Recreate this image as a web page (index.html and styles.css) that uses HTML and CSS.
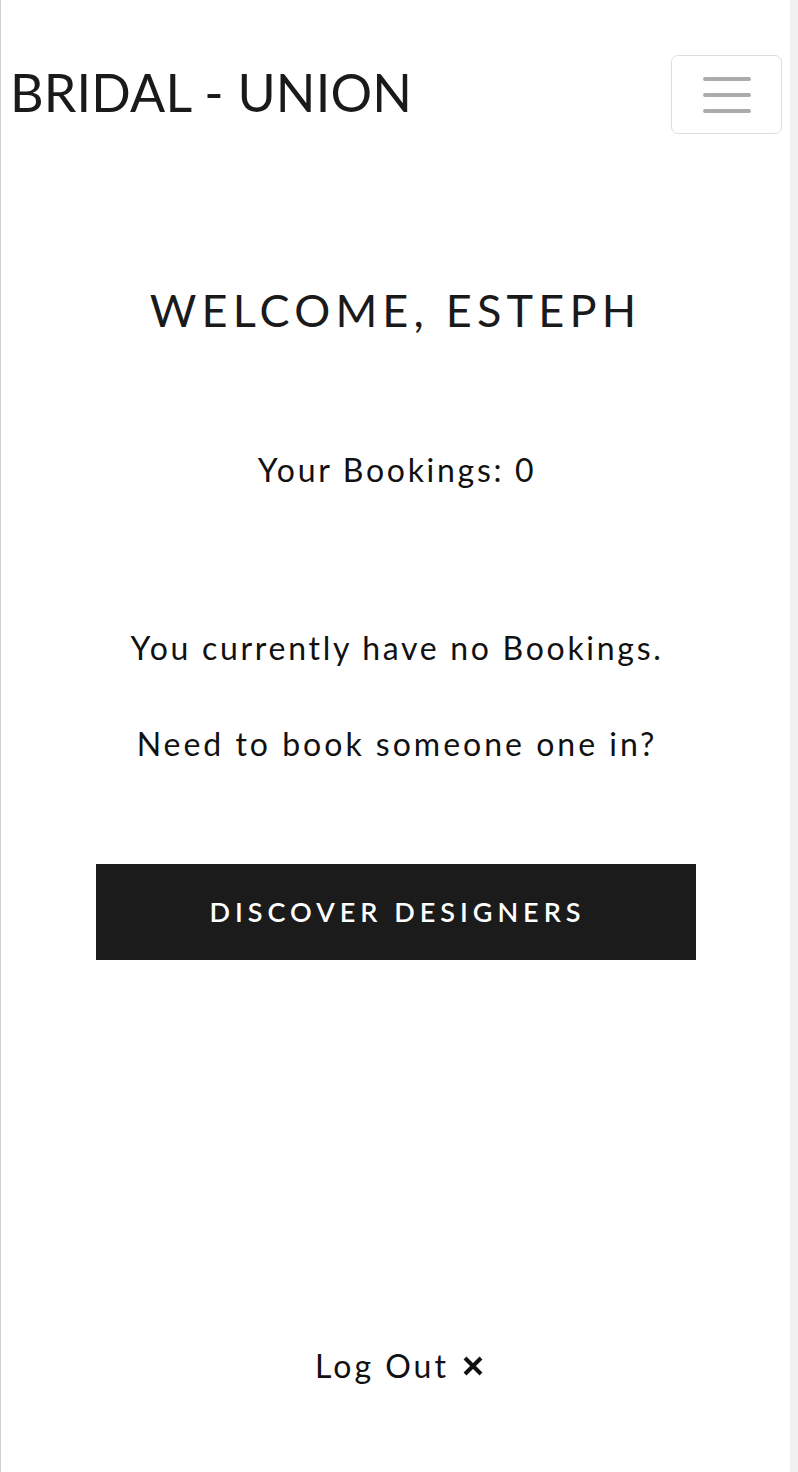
FILE: index.html
```html
<!DOCTYPE html>
<html lang="en">
<head>
<meta charset="utf-8">
<title>Bridal - Union</title>
<link rel="stylesheet" href="styles.css">
</head>
<body>
<div class="page">
  <nav class="navbar">
    <a class="brand" href="#">BRIDAL - UNION</a>
    <button class="toggler" aria-label="Toggle navigation">
      <span class="bar"></span><span class="bar"></span><span class="bar"></span>
    </button>
  </nav>
  <main class="content">
    <h1 class="welcome">WELCOME, ESTEPH</h1>
    <p class="count">Your Bookings: 0</p>
    <p class="empty">You currently have no Bookings.</p>
    <p class="prompt">Need to book someone one in?</p>
    <a class="cta" href="#">DISCOVER DESIGNERS</a>
    <a class="logout" href="#">Log Out
      <svg class="x" viewBox="0 0 22 22" width="22" height="22" aria-hidden="true"><path d="M3 3 L19 19 M19 3 L3 19" stroke="#111" stroke-width="4" stroke-linecap="butt" fill="none"/></svg>
    </a>
  </main>
</div>
</body>
</html>
```
FILE: styles.css
```css
html { background: #f1f1f4; }
body { margin: 0; }
.page {
  width: 789px;
  min-height: 1472px;
  background: #fff;
  border-left: 1px solid #cfcfcf;
  box-sizing: content-box;
}
.navbar {
  display: flex;
  justify-content: space-between;
  align-items: center;
  padding: 55px 8px 0 9px;
}
.brand {
  font-family: "Lato", "Liberation Sans", sans-serif;
  font-size: 52px;
  line-height: 72px;
  margin-bottom: 6px;
  letter-spacing: 0.2px;
  color: #1a1a1a;
  text-decoration: none;
}
.toggler {
  width: 111px;
  height: 79px;
  border: 1px solid #dedede;
  border-radius: 7px;
  background: #fff;
  display: flex;
  flex-direction: column;
  align-items: center;
  justify-content: center;
  gap: 12px;
  padding: 0;
}
.bar {
  display: block;
  width: 48px;
  height: 4px;
  border-radius: 2px;
  background: #ababab;
}
.content {
  text-align: center;
  display: flex;
  flex-direction: column;
  align-items: center;
  font-family: "Lato", "Liberation Sans", sans-serif;
  color: #111;
}
.welcome {
  margin: 146px 0 0;
  font-size: 45px;
  font-weight: 400;
  line-height: 60px;
  letter-spacing: 5.2px;
  color: #1a1a1a;
}
.count, .empty, .prompt {
  margin: 0;
  font-size: 32px;
  line-height: 40px;
  letter-spacing: 2.7px;
  padding-left: 3px;
}
.prompt { letter-spacing: 3px; }
.count { margin-top: 110px; }
.empty { margin-top: 138px; }
.prompt { margin-top: 56px; }
.cta {
  margin-top: 100px;
  width: 600px;
  height: 96px;
  line-height: 96px;
  background: #1b1b1b;
  color: #fff;
  text-decoration: none;
  font-size: 27px;
  font-weight: 600;
  letter-spacing: 5px;
  padding-left: 4px;
  box-sizing: border-box;
}
.logout {
  margin-top: 386px;
  padding-left: 8px;
  font-size: 32px;
  line-height: 40px;
  letter-spacing: 3px;
  color: #111;
  text-decoration: none;
  display: flex;
  align-items: center;
  gap: 13px;
}
.x { display: block; }
```
